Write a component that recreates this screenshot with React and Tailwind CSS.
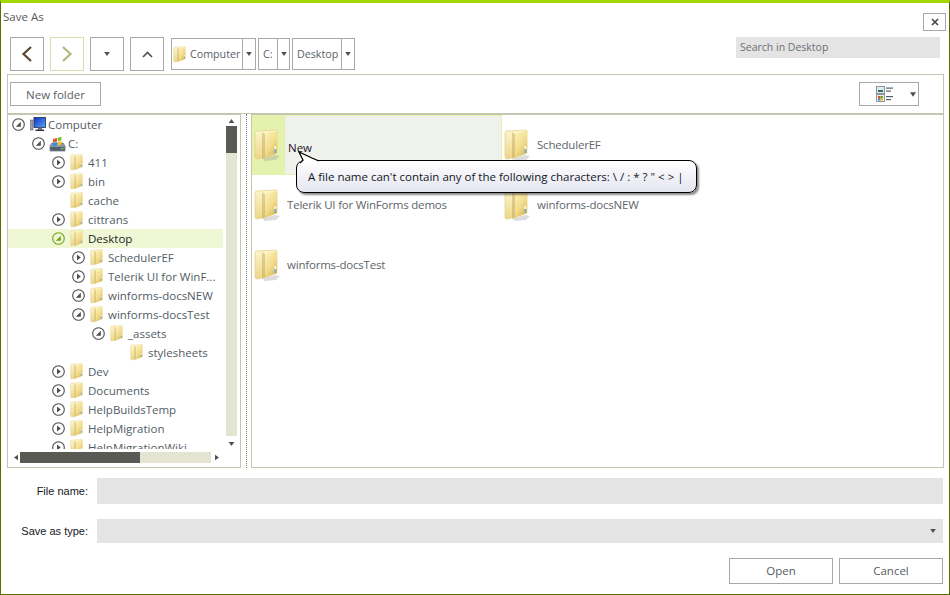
const UI_FONT = "font-['Open_Sans','Noto_Sans',sans-serif]";

function GradientDefs() {
    return (
        <svg width="0" height="0" className="absolute">
            <defs>
                <linearGradient id="leaf" x1="0" y1="0" x2="0.6" y2="1">
                    <stop offset="0" stopColor="#fcf2b8" />
                    <stop offset="0.6" stopColor="#f3dd8e" />
                    <stop offset="1" stopColor="#dcbc5c" />
                </linearGradient>
                <linearGradient id="back" x1="0" y1="0" x2="0" y2="1">
                    <stop offset="0" stopColor="#fdf6cc" />
                    <stop offset="1" stopColor="#ecd688" />
                </linearGradient>
                <linearGradient id="screen" x1="0" y1="0" x2="1" y2="1">
                    <stop offset="0" stopColor="#0f2fc8" />
                    <stop offset="1" stopColor="#58a8f4" />
                </linearGradient>
            </defs>
        </svg>
    );
}

function Folder({ large }) {
    return (
        <svg viewBox="0 0 26 32" className={large ? "w-[26px] h-[32px]" : "w-[14px] h-[17px]"}>
            {large && <path d="M10 29 L21 26 L26 27 L22 31 L10 32 Z" fill="#9a9a9a" opacity="0.35" />}
            <path d="M1 4 Q1 2 3 2 L22 1 Q23 1 23 2 L23 24 L4 30 Q1 30 1 28 Z" fill="url(#back)" stroke="#e2cf88" strokeWidth="0.7" />
            <path d="M8 3 L12 6 L12 28 L8 31 Z" fill="#b89c4c" opacity="0.4" />
            <path d="M11 5 L23 2 L23 24 L11 29 Z" fill="url(#leaf)" />
            <rect x="20.5" y="17" width="1.6" height="3" fill="#fffdf0" />
            <rect x="20.5" y="20" width="1.6" height="4" fill="#6fb0dc" />
        </svg>
    );
}

function ComputerIcon() {
    return (
        <svg viewBox="0 0 16 15" className="w-[16px] h-[15px]">
            <rect x="0.5" y="3" width="2.5" height="10" fill="#9aa2ac" stroke="#4a5058" strokeWidth="0.5" />
            <rect x="4" y="0.5" width="11.5" height="10" fill="url(#screen)" stroke="#1c2a48" strokeWidth="0.8" />
            <rect x="8" y="10.5" width="4" height="2" fill="#667" />
            <rect x="5.5" y="12.5" width="8.5" height="1.5" fill="#2b3038" />
        </svg>
    );
}

function DriveIcon() {
    return (
        <svg viewBox="0 0 17 16" className="w-[17px] h-[16px]">
            <path d="M1 10 L3 7 L14 7 L16 10 L16 15 L1 15 Z" fill="#8b98a4" stroke="#4c5560" strokeWidth="0.6" />
            <rect x="1.5" y="11" width="14" height="3.5" fill="#4e6070" />
            <rect x="12" y="12" width="2.5" height="1.2" fill="#7ed04a" />
            <path d="M4 3 L8 2 L8 5.5 L4 6.5 Z" fill="#e2542c" />
            <path d="M8.7 1.8 L12.5 0.8 L12.5 4.3 L8.7 5.3 Z" fill="#7cb934" />
            <path d="M4 7 L8 6.2 L8 9.6 L4 10.4 Z" fill="#2f8fe0" />
            <path d="M8.7 6 L12.5 5 L12.5 8.6 L8.7 9.4 Z" fill="#f4c22c" />
        </svg>
    );
}

function Expander({ state }) {
    if (state === "none") return <span className="w-[18px] shrink-0" />;
    const green = state === "selected";
    const color = green ? "#72a01a" : "#4d4d4d";
    return (
        <span className="w-[18px] shrink-0 flex items-center">
            <svg viewBox="0 0 13 13" className="w-[13px] h-[13px]">
                <circle cx="6.5" cy="6.5" r="5.8" fill="none" stroke={color} strokeWidth="1.1" />
                {state === "open" || green ? (
                    <path d="M3.8 8.8 L8.8 8.8 L8.8 3.8 Z" fill={color} />
                ) : (
                    <path d="M5 3.6 L8.8 6.5 L5 9.4 Z" fill={color} />
                )}
            </svg>
        </span>
    );
}

const treeRows = [
    { level: 0, label: "Computer", state: "open", icon: "computer" },
    { level: 1, label: "C:", state: "open", icon: "drive" },
    { level: 2, label: "411", state: "closed" },
    { level: 2, label: "bin", state: "closed" },
    { level: 2, label: "cache", state: "none" },
    { level: 2, label: "cittrans", state: "closed" },
    { level: 2, label: "Desktop", state: "selected" },
    { level: 3, label: "SchedulerEF", state: "closed" },
    { level: 3, label: "Telerik UI for WinF...", state: "closed" },
    { level: 3, label: "winforms-docsNEW", state: "open" },
    { level: 3, label: "winforms-docsTest", state: "open" },
    { level: 4, label: "_assets", state: "open" },
    { level: 5, label: "stylesheets", state: "none" },
    { level: 2, label: "Dev", state: "closed" },
    { level: 2, label: "Documents", state: "closed" },
    { level: 2, label: "HelpBuildsTemp", state: "closed" },
    { level: 2, label: "HelpMigration", state: "closed" },
    { level: 2, label: "HelpMigrationWiki", state: "closed" },
];

const levelPadding = ["pl-[4px]", "pl-[24px]", "pl-[44px]", "pl-[64px]", "pl-[84px]", "pl-[104px]"];

function TreeRow({ row }) {
    const selected = row.state === "selected";
    return (
        <div
            className={`h-[19px] w-[215px] flex items-center whitespace-nowrap ${levelPadding[row.level]} ${
                selected ? "bg-[#f0f7d4] text-[#1c2428]" : "text-[#525c64]"
            }`}
        >
            <Expander state={row.state} />
            <span className={`shrink-0 flex items-center ${row.icon === "drive" ? "w-[19px] -ml-[1px]" : "w-[18px]"}`}>
                {row.icon === "computer" ? <ComputerIcon /> : row.icon === "drive" ? <DriveIcon /> : <Folder />}
            </span>
            <span className="pt-[1px]">{row.label}</span>
        </div>
    );
}

function Tri({ dir = "down", className = "" }) {
    const d = {
        down: "M0 0 L7 0 L3.5 5 Z",
        up: "M0 5 L7 5 L3.5 0 Z",
        left: "M5 0 L5 7 L0 3.5 Z",
        right: "M0 0 L0 7 L5 3.5 Z",
    }[dir];
    return (
        <svg viewBox={dir === "left" || dir === "right" ? "0 0 5 7" : "0 0 7 5"} className={className}>
            <path d={d} fill="#4f4f4f" />
        </svg>
    );
}

function NavButton({ children, pale }) {
    return (
        <button className={`w-[34px] h-[34px] border flex items-center justify-center ${pale ? "border-[#d3dfae]" : "border-[#a9a9a9]"}`}>
            {children}
        </button>
    );
}

function Crumb({ label, width, split, folder }) {
    return (
        <div className={`h-[32px] mt-[1px] border border-[#a9a9a9] flex text-[#5a6168] text-[10.7px] ${width}`}>
            <div className={`flex items-center ${split} ${folder ? "pl-[1px]" : "pl-[4px]"} border-r border-[#a9a9a9] whitespace-nowrap`}>
                {folder && (
                    <span className="mr-[3px] flex">
                        <Folder />
                    </span>
                )}
                {label}
            </div>
            <div className="flex-1 flex items-center justify-center">
                <Tri className="w-[6px] h-[4px]" />
            </div>
        </div>
    );
}

function FileItem({ label, selected }) {
    return (
        <div className="flex items-center h-[60px]">
            <div className={`w-[33px] h-[60px] shrink-0 pl-[2px] flex items-center ${selected ? "bg-[#e4f2ae]" : ""}`}>
                <Folder large />
            </div>
            {selected ? (
                <div className="w-[217px] h-[60px] bg-[#eff2ec] border border-l-0 border-[#e4f2ae] pl-[3px] pt-[23px] text-[#23121c]">
                    {label}
                </div>
            ) : (
                <span className="pl-[2px] text-[#5e656b] whitespace-nowrap tracking-[-0.2px]">{label}</span>
            )}
        </div>
    );
}

function FormButton({ label }) {
    return (
        <button className="w-[104px] h-[26px] border border-[#a9a9a9] text-[#555c62] flex items-center justify-center">
            {label}
        </button>
    );
}

export default function App() {
    return (
        <div className={`w-[950px] h-[595px] bg-white border-x border-b border-[#5a6e00] border-t-[3px] border-t-[#a4d600] flex flex-col text-[11.5px] overflow-hidden ${UI_FONT}`}>
            <GradientDefs />
            <div className="h-[34px] pl-[2px] pr-[3px] flex justify-between shrink-0">
                <span className="mt-[6px] text-[#5a5a5a] leading-[16px]">Save As</span>
                <button className="mt-[10px] w-[23px] h-[18px] border border-[#a9a9a9] flex items-center justify-center">
                    <svg viewBox="0 0 8 8" className="w-[8px] h-[8px]">
                        <path d="M1 1 L7 7 M7 1 L1 7" stroke="#444" strokeWidth="1.6" />
                    </svg>
                </button>
            </div>

            <div className="h-[37px] pl-[9px] pr-[9px] flex items-start shrink-0">
                <div className="flex gap-[6px] mr-[7px]">
                    <NavButton>
                        <svg viewBox="0 0 12 16" className="w-[12px] h-[16px]">
                            <path d="M10 1 L2.5 8 L10 15" fill="none" stroke="#5a4630" strokeWidth="2.2" />
                        </svg>
                    </NavButton>
                    <NavButton pale>
                        <svg viewBox="0 0 12 16" className="w-[12px] h-[16px]">
                            <path d="M2 1 L9.5 8 L2 15" fill="none" stroke="#adbb80" strokeWidth="2.2" />
                        </svg>
                    </NavButton>
                    <NavButton>
                        <Tri className="w-[6px] h-[4px]" />
                    </NavButton>
                    <NavButton>
                        <svg viewBox="0 0 11 7" className="w-[11px] h-[7px]">
                            <path d="M1 6 L5.5 1.5 L10 6" fill="none" stroke="#4f4f4f" strokeWidth="1.6" />
                        </svg>
                    </NavButton>
                </div>
                <div className="flex gap-[2px]">
                    <Crumb label="Computer" width="w-[85px]" split="w-[71px]" folder />
                    <Crumb label="C:" width="w-[32px]" split="w-[19px]" />
                    <Crumb label="Desktop" width="w-[63px]" split="w-[49px]" />
                </div>
                <div className="ml-auto w-[204px] h-[21px] bg-[#e4e4e4] pl-[4px] flex items-center text-[#6a7076] text-[10.5px]">
                    Search in Desktop
                </div>
            </div>

            <div className="ml-[6px] mr-[5px] flex flex-col shrink-0">
                <div className="h-[40px] border border-[#c5c6b2] flex items-start justify-between pt-[7px] pl-[2px] pr-[24px]">
                    <button className="w-[91px] h-[24px] pt-[1px] border border-[#a9a9a9] text-[#5a6168] flex items-center justify-center">
                        New folder
                    </button>
                    <button className="w-[60px] h-[24px] border border-[#a9a9a9] flex items-center pl-[16px]">
                        <svg viewBox="0 0 17 16" className="w-[17px] h-[16px]">
                            <rect x="0.5" y="0.5" width="8" height="7" fill="#d8eef4" stroke="#8a96a4" />
                            <rect x="2" y="4" width="5" height="2" fill="#3f6e50" />
                            <rect x="10" y="1.5" width="7" height="1.2" fill="#55606c" />
                            <rect x="10" y="4.5" width="5" height="1.2" fill="#55606c" />
                            <rect x="0.5" y="8.5" width="8" height="7" fill="#f4f0e0" stroke="#8a96a4" />
                            <rect x="2" y="10" width="2.5" height="2.5" fill="#d8502c" />
                            <rect x="4.5" y="10" width="2.5" height="2.5" fill="#6aaa34" />
                            <rect x="2" y="12.5" width="2.5" height="2" fill="#3a80d0" />
                            <rect x="4.5" y="12.5" width="2.5" height="2" fill="#e8b82c" />
                            <rect x="10" y="10" width="7" height="1.2" fill="#55606c" />
                            <rect x="10" y="13" width="5" height="1.2" fill="#55606c" />
                        </svg>
                        <Tri className="ml-[17px] w-[6px] h-[5px]" />
                    </button>
                </div>

                <div className="h-[354px] flex">
                    <div className="w-[234px] h-full border border-[#c5c6b2] flex flex-col">
                        <div className="h-[334px] flex">
                            <div className="w-[218px] h-full overflow-hidden">
                                {treeRows.map((row) => (
                                    <TreeRow key={row.label} row={row} />
                                ))}
                            </div>
                            <div className="w-[11px] h-[334px] flex flex-col">
                                <div className="h-[11px] flex items-center justify-center">
                                    <Tri dir="up" className="w-[7px] h-[4px]" />
                                </div>
                                <div className="h-[310px] bg-[#e3e5d2]">
                                    <div className="h-[27px] bg-[#5a5a54]" />
                                </div>
                                <div className="flex-1 pt-[3px] flex items-center justify-center">
                                    <Tri className="w-[7px] h-[4px]" />
                                </div>
                            </div>
                        </div>
                        <div className="mt-[3px] h-[11px] pl-[4px] flex items-center">
                            <div className="w-[8px] flex justify-center">
                                <Tri dir="left" className="w-[4px] h-[7px]" />
                            </div>
                            <div className="w-[191px] h-full bg-[#e3e5d2]">
                                <div className="w-[120px] h-full bg-[#5a5a54]" />
                            </div>
                            <div className="w-[12px] flex justify-center">
                                <Tri dir="right" className="w-[4px] h-[7px]" />
                            </div>
                        </div>
                    </div>

                    <div className="w-[10px] flex justify-center">
                        <div className="h-full border-l border-dotted border-[#777]" />
                    </div>

                    <div className="relative flex-1 border border-[#c5c6b2]">
                        <div className="grid grid-cols-[250px_250px]">
                            <FileItem label="New" selected />
                            <FileItem label="SchedulerEF" />
                            <FileItem label="Telerik UI for WinForms demos" />
                            <FileItem label="winforms-docsNEW" />
                            <FileItem label="winforms-docsTest" />
                        </div>
                        <div className="absolute left-[44px] top-[45px] w-[401px] h-[33px] rounded-[8px] border-[1.5px] border-black bg-gradient-to-b from-white to-[#e4e5f0] shadow-[2px_2px_2px_rgba(0,0,0,0.45)] pl-[11px] flex items-center text-[#14161c] whitespace-nowrap">
                            A file name can't contain any of the following characters: \ / : * ? " &lt; &gt; |
                        </div>
                        <svg viewBox="0 0 24 16" className="absolute left-[46px] top-[36px] w-[24px] h-[16px]">
                            <path d="M1 1 L20 10 L21 11 L2 12 Z" fill="#fff" />
                            <path d="M2 12 L5 9 L1 1 L14 7 L21 10" fill="none" stroke="#000" strokeWidth="1.3" />
                        </svg>
                    </div>
                </div>
            </div>

            <div className="mt-[10px] h-[26px] pr-[6px] flex items-center shrink-0">
                <label className="w-[87px] text-right font-['Liberation_Sans',sans-serif] text-[11px] text-[#14181c]">File name:</label>
                <div className="ml-[9px] flex-1 h-full bg-[#e4e4e4]" />
            </div>
            <div className="mt-[15px] h-[24px] pr-[6px] flex items-center shrink-0">
                <label className="w-[87px] text-right font-['Liberation_Sans',sans-serif] text-[11px] text-[#14181c]">Save as type:</label>
                <div className="ml-[9px] flex-1 h-full bg-[#e4e4e4] flex items-center justify-end pr-[7px]">
                    <Tri className="w-[6px] h-[4px]" />
                </div>
            </div>
            <div className="mt-[15px] pr-[6px] flex justify-end gap-[6px] shrink-0">
                <FormButton label="Open" />
                <FormButton label="Cancel" />
            </div>
        </div>
    );
}
